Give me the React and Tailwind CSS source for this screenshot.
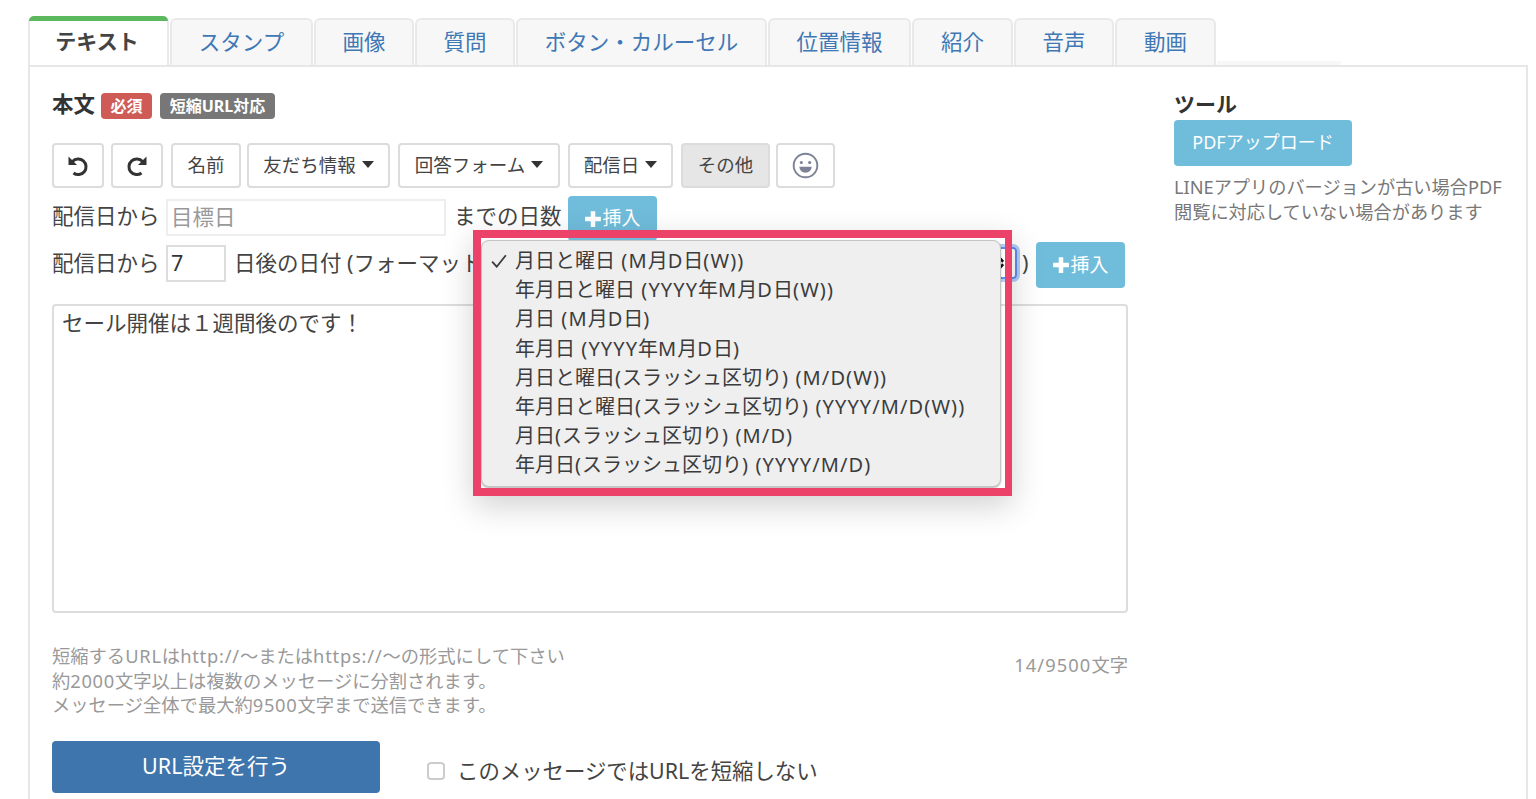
import React from "react";

const Caret = () => (
  <span className="ml-[6px] inline-block h-0 w-0 border-x-[6px] border-t-[7px] border-x-transparent border-t-[#333]" />
);

const Plus = () => (
  <svg viewBox="0 0 16 16" className="h-[18px] w-[18px] fill-white">
    <path d="M6 1h4v5h5v4h-5v5H6v-5H1V6h5z" />
  </svg>
);

const Undo = ({ flip }) => (
  <svg viewBox="0 0 24 24" className={flip ? "h-[24px] w-[24px] -scale-x-100" : "h-[24px] w-[24px]"} fill="none">
    <path d="M6.500 8.500A7.800 7.800 0 1 1 7.500 20" stroke="#333" strokeWidth="3" />
    <path d="M2.500 3.500v8.500h8.500z" fill="#333" />
  </svg>
);

// Latin runs of a string are spaced a little wider than the CJK around them.
const spaced = (text, cls) =>
  text.split(/([\x20-\x7e]+)/).map((part, i) =>
    i % 2 ? (
      <span key={i} className={cls}>
        {part}
      </span>
    ) : (
      part
    )
  );

const Tab = ({ label, className }) => (
  <div
    className={`flex h-[47px] items-center justify-center rounded-t-md border-2 border-b-0 border-[#e9e9e9] bg-[#f7f7f7] pb-[1px] text-[21.500px] text-[#3f78b5] ${className}`}
  >
    {label}
  </div>
);

const ToolButton = ({ children, className = "" }) => (
  <div
    className={`flex h-[45px] items-center justify-center rounded border-2 border-[#dcdcdc] bg-white pb-[2px] text-[18.500px] text-[#444] ${className}`}
  >
    {children}
  </div>
);

const InsertButton = ({ className = "" }) => (
  <div
    className={`flex items-center justify-center rounded bg-[#70bcdb] text-[19px] text-white ${className}`}
  >
    <Plus />
    <span>挿入</span>
  </div>
);

const options = [
  "月日と曜日 (M月D日(W))",
  "年月日と曜日 (YYYY年M月D日(W))",
  "月日 (M月D日)",
  "年月日 (YYYY年M月D日)",
  "月日と曜日(スラッシュ区切り) (M/D(W))",
  "年月日と曜日(スラッシュ区切り) (YYYY/M/D(W))",
  "月日(スラッシュ区切り) (M/D)",
  "年月日(スラッシュ区切り) (YYYY/M/D)",
];

export default function App() {
  return (
    <div className="relative h-[799px] w-[1536px] overflow-hidden bg-white pl-[28px] pt-[16px] font-['Noto_Sans','Noto_Sans_CJK_JP',sans-serif] text-[#444]">
      <div className="flex h-[49px] items-end gap-[1px]">
        <div className="relative z-10 flex h-[49px] w-[141px] items-center justify-center rounded-t-md border-x-2 border-[#e9e9e9] bg-white text-[21px] font-bold text-[#444]">
          <div className="absolute -left-[1px] -right-[1px] top-0 h-[5px] rounded-t-md bg-[#5cb85c]" />
          <span className="pr-[3px] pt-[3px]">テキスト</span>
        </div>
        <Tab label="スタンプ" className="w-[143px]" />
        <Tab label="画像" className="w-[100px]" />
        <Tab label="質問" className="w-[100px]" />
        <Tab label="ボタン・カルーセル" className="w-[251px]" />
        <Tab label="位置情報" className="w-[143px]" />
        <Tab label="紹介" className="w-[101px]" />
        <Tab label="音声" className="w-[100px]" />
        <Tab label="動画" className="w-[101px]" />
        <div className="h-[4px] w-[124px] bg-[#f7f7f7]" />
      </div>

      <div className="flex h-[734px] w-[1500px] gap-[46px] border-x-2 border-t-2 border-[#e7e7e7] pl-[22px] pt-[26px]">
        <div className="w-[1076px] shrink-0">
          <div className="flex h-[26px] items-center">
            <span className="pb-[3px] text-[21.500px] font-bold text-[#333]">本文</span>
            <span className="ml-[6px] flex h-[26px] w-[51px] items-center justify-center rounded bg-[#cf5b56] text-[16px] font-bold text-white">
              必須
            </span>
            <span className="ml-[8px] flex h-[26px] w-[115px] items-center justify-center rounded bg-[#777] text-[16px] font-bold text-white">
              短縮URL対応
            </span>
          </div>

          <div className="mt-[24px] flex">
            <ToolButton className="w-[52px]">
              <Undo />
            </ToolButton>
            <ToolButton className="ml-[7px] w-[52px]">
              <Undo flip />
            </ToolButton>
            <ToolButton className="ml-[8px] w-[70px]">名前</ToolButton>
            <ToolButton className="ml-[6px] w-[143px]">
              友だち情報
              <Caret />
            </ToolButton>
            <ToolButton className="ml-[8px] w-[162px]">
              回答フォーム
              <Caret />
            </ToolButton>
            <ToolButton className="ml-[8px] w-[105px]">
              配信日
              <Caret />
            </ToolButton>
            <ToolButton className="ml-[8px] w-[89px] !bg-[#e6e6e6]">その他</ToolButton>
            <ToolButton className="ml-[6px] w-[59px]">
              <svg viewBox="0 0 24 24" className="mt-[2px] h-[27px] w-[27px]" fill="none" stroke="#7d8296" strokeWidth="1.7">
                <circle cx="12" cy="12" r="10.500" />
                <circle cx="8.300" cy="9.300" r="1.400" fill="#7d8296" stroke="none" />
                <circle cx="15.700" cy="9.300" r="1.400" fill="#7d8296" stroke="none" />
                <path d="M6.500 13.200h11c-.3 3.300-2.600 5.300-5.500 5.300s-5.200-2-5.500-5.300z" fill="#7d8296" stroke="none" />
              </svg>
            </ToolButton>
          </div>

          <div className="mt-[8px] flex h-[45px] items-center text-[21.500px]">
            <span className="w-[114px] shrink-0 pb-[4px]">配信日から</span>
            <input
              readOnly
              placeholder="目標日"
              className="mb-[2px] h-[37px] w-[280px] border-2 border-[#eeeeee] pb-[3px] pl-[3px] text-[21.500px] placeholder:text-[#999] outline-none"
            />
            <span className="ml-[8px] w-[114px] shrink-0 pb-[4px]">までの日数</span>
            <InsertButton className="h-[45px] w-[89px]" />
          </div>

          <div className="mt-[1px] flex h-[46px] items-center text-[21.500px]">
            <span className="w-[114px] shrink-0 pb-[4px]">配信日から</span>
            <input
              readOnly
              value="7"
              className="mb-[3px] h-[37px] w-[60px] border-2 border-[#dddddd] pb-[3px] pl-[3px] text-[21.500px] text-[#333] outline-none"
            />
            <span className="ml-[8px] w-[251px] shrink-0 whitespace-nowrap pb-[4px]">日後の日付 (フォーマット</span>
            <div className="mb-[5px] flex h-[32px] w-[532px] shrink-0 items-center justify-end rounded border-2 border-[#5b8def] pr-[11px] shadow-[0_0_0_3px_#b3ccf7]">
              <svg viewBox="0 0 10 16" className="h-[16px] w-[8px]" fill="none" stroke="#111" strokeWidth="3.400">
                <path d="M1 6.500 5 2l4 4.500M1 9.500 5 14l4-4.500" />
              </svg>
            </div>
            <span className="ml-[5px] w-[14px] shrink-0 pb-[4px]">)</span>
            <InsertButton className="h-[46px] w-[89px]" />
          </div>

          <textarea
            readOnly
            value="セール開催は１週間後のです！"
            className="mt-[16px] block h-[309px] w-[1076px] resize-none rounded border-2 border-[#dddddd] px-[8px] py-[1px] text-[21.500px] text-[#444] outline-none"
          />

          <div className="mt-[31px] flex items-start justify-between text-[18.300px] leading-[24.500px] text-[#999]">
            <div>
              <div>{spaced("短縮するURLはhttp://〜またはhttps://〜の形式にして下さい", "tracking-[0.8px]")}</div>
              <div>{spaced("約2000文字以上は複数のメッセージに分割されます。", "tracking-[0.7px]")}</div>
              <div>{spaced("メッセージ全体で最大約9500文字まで送信できます。", "tracking-[0.7px]")}</div>
            </div>
            <div className="mt-[9px]">{spaced("14/9500文字", "tracking-[1.100px]")}</div>
          </div>

          <div className="mt-[23px] flex items-center">
            <div className="flex h-[52px] w-[328px] items-center justify-center rounded bg-[#3f75ad] text-[21.500px] text-white">
              URL設定を行う
            </div>
            <div className="ml-[47px] mt-[9px] flex items-center text-[21.400px] text-[#444]">
              <span className="h-[18px] w-[18px] rounded-[4px] border-2 border-[#ccc] bg-white" />
              <span className="ml-[12px]">このメッセージではURLを短縮しない</span>
            </div>
          </div>
        </div>

        <div className="flex-1">
          <div className="h-[26px] text-[21px] font-bold leading-[22px] text-[#333]">ツール</div>
          <div className="mt-[1px] flex h-[46px] w-[178px] items-center justify-center rounded bg-[#70bcdb] pb-[2px] text-[18px] text-white">
            PDFアップロード
          </div>
          <div className="mt-[9px] text-[18.200px] leading-[25px] text-[#777]">
            <div>LINEアプリのバージョンが古い場合PDF</div>
            <div>閲覧に対応していない場合があります</div>
          </div>
        </div>
      </div>

      {/* native select menu */}
      <div className="absolute left-[481px] top-[240px] z-20 h-[247px] w-[520px] rounded-lg border border-[#c4c4c4] bg-[#efeff0] pl-[9px] pt-[5px] text-[20px] leading-[29.200px] text-[#3c3c3c] shadow-[0_1px_2px_rgba(0,0,0,0.3)]">
        {options.map((o, i) => (
          <div key={o} className="flex items-center whitespace-nowrap">
            <span className="w-[24px] shrink-0">
              {i === 0 && (
                <svg viewBox="0 0 14 12" className="h-[14px] w-[16px]" fill="none" stroke="#3c3c3c" strokeWidth="1.600">
                  <path d="M1 6.500 5 11l8-10" />
                </svg>
              )}
            </span>
            <span>{spaced(o, "tracking-[1.100px]")}</span>
          </div>
        ))}
      </div>
      {/* highlight frame */}
      <div className="pointer-events-none absolute left-[473px] top-[230px] z-30 h-[266px] w-[539px] border-x-[7px] border-y-[8px] border-l-[8px] border-[#ec4169] shadow-[0_10px_30px_rgba(0,0,0,0.18)]" />
    </div>
  );
}
